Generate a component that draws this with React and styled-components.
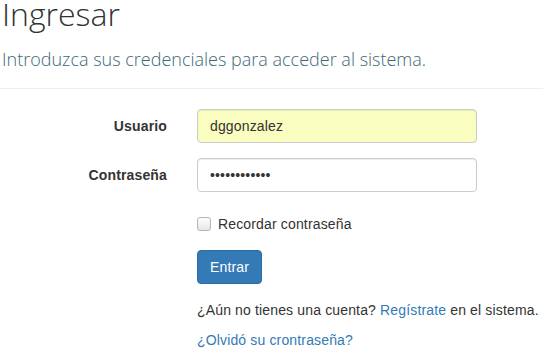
import React from "react";
import styled, { createGlobalStyle } from "styled-components";

const Global = createGlobalStyle`
  html, body { margin: 0; padding: 0; background: #fff; }
  body { font-family: "Liberation Sans", Arial, sans-serif; font-size: 14px; color: #333; }
`;

const Page = styled.div`
  width: 543px;
  height: 350px;
  overflow: hidden;
`;

const Header = styled.header`
  padding: 0 0 0 2px;
  border-bottom: 1px solid #eee;
  height: 89px;
  box-sizing: border-box;
`;

const Title = styled.h1`
  margin: 0;
  font-family: "Open Sans", sans-serif;
  font-weight: 300;
  font-size: 32px;
  line-height: 28px;
  color: #333;
`;

const Subtitle = styled.p`
  margin: 19px 0 0;
  font-family: "Open Sans", sans-serif;
  font-weight: 300;
  font-size: 18px;
  line-height: 24px;
  color: #3e6878;
`;

const Form = styled.form`
  display: flex;
  flex-direction: column;
  padding-top: 20px;
  letter-spacing: 0.15px;
`;

const Row = styled.div`
  display: grid;
  grid-template-columns: 167px 280px;
  column-gap: 30px;
  align-items: center;
  margin-bottom: ${(p) => p.$mb ?? 15}px;
`;

const Label = styled.label`
  text-align: right;
  font-weight: bold;
  font-size: 14px;
  color: #333;
`;

const Input = styled.input`
  box-sizing: border-box;
  width: 280px;
  height: 34px;
  padding: 6px 12px;
  font-family: "Liberation Sans", Arial, sans-serif;
  font-size: 14px;
  letter-spacing: 0.15px;
  color: #333;
  background: ${(p) => (p.$filled ? "#fafdc0" : "#fff")};
  border: 1px solid #ccc;
  border-radius: 4px;
  box-shadow: inset 0 1px 1px rgba(0, 0, 0, 0.075);
  outline: none;
`;

const CheckLabel = styled.label`
  grid-column: 2;
  display: flex;
  align-items: center;
  gap: 7px;
  padding-top: 7px;
  line-height: 20px;
  font-size: 14px;
  color: #333;
`;

const Check = styled.span`
  width: 12px;
  height: 12px;
  border: 1px solid #b5b5b5;
  border-radius: 3px;
  background: linear-gradient(#fcfcfc, #e8e8e8);
  flex: none;
`;

const Button = styled.button`
  grid-column: 2;
  justify-self: start;
  height: 34px;
  padding: 6px 12px;
  font-family: "Liberation Sans", Arial, sans-serif;
  font-size: 14px;
  letter-spacing: 0.15px;
  color: #fff;
  background: #337ab7;
  border: 1px solid #2e6da4;
  border-radius: 4px;
`;

const Text = styled.p`
  grid-column: 2;
  margin: 0;
  line-height: 20px;
  font-size: 14px;
  color: #333;
  white-space: nowrap;
`;

const Link = styled.a`
  color: #337ab7;
  text-decoration: none;
`;

export default function App() {
  return (
    <>
      <Global />
      <Page>
        <Header>
          <Title>Ingresar</Title>
          <Subtitle>Introduzca sus credenciales para acceder al sistema.</Subtitle>
        </Header>
        <Form>
          <Row>
            <Label>Usuario</Label>
            <Input $filled defaultValue="dggonzalez" />
          </Row>
          <Row>
            <Label>Contraseña</Label>
            <Input type="password" defaultValue="123456789012" />
          </Row>
          <Row $mb={16}>
            <CheckLabel>
              <Check />
              Recordar contraseña
            </CheckLabel>
          </Row>
          <Row $mb={16}>
            <Button type="button">Entrar</Button>
          </Row>
          <Row $mb={10}>
            <Text>
              ¿Aún no tienes una cuenta? <Link href="#">Regístrate</Link> en el sistema.
            </Text>
          </Row>
          <Row $mb={0}>
            <Text>
              <Link href="#">¿Olvidó su crontraseña?</Link>
            </Text>
          </Row>
        </Form>
      </Page>
    </>
  );
}
